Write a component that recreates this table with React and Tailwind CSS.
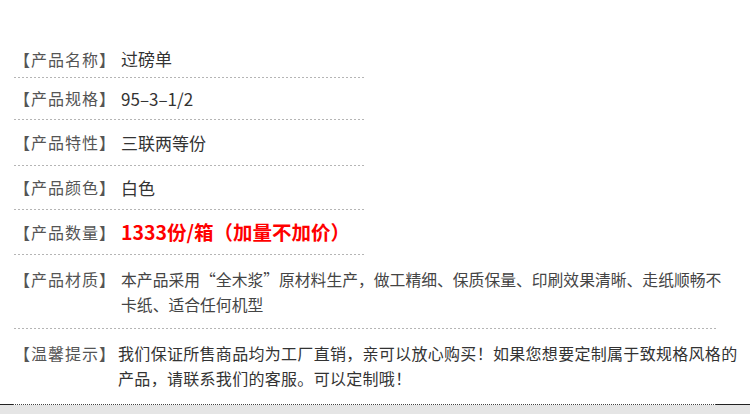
import React from "react";

const rows = [
  { label: "产品名称", value: "过磅单", h: "h-[36px]" },
  { label: "产品规格", value: "95–3–1/2", h: "h-[41px]" },
  { label: "产品特性", value: "三联两等份", h: "h-[45px]" },
  { label: "产品颜色", value: "白色", h: "h-[43px]" },
  { label: "产品数量", value: "1333份/箱（加量不加价）", h: "h-[44px]", red: true },
];

const Dashed = ({ className }) => (
  <div
    className={
      "h-px bg-[linear-gradient(to_right,#b5b5b5_60%,transparent_0)] bg-[length:4px_1px] " +
      className
    }
  ></div>
);

const Label = ({ text }) => (
  <span className="shrink-0 text-[16px] tracking-[1px] leading-[25px] text-[#555]">【{text}】</span>
);

const App = () => {
  return (
    <div className="w-[750px] h-[414px] bg-white flex flex-col font-['Noto_Sans_CJK_SC',sans-serif] overflow-hidden">
      <div className="h-[41px]"></div>

      {rows.map((r) => (
        <div key={r.label} className="flex flex-col">
          <div className={"flex items-center pl-[14px] " + r.h}>
            <Label text={r.label} />
            {r.red ? (
              <span className="ml-[5px] text-[19.5px] font-bold text-[#ff0000]">{r.value}</span>
            ) : (
              <span className="ml-[5px] text-[17px] text-[#333]">{r.value}</span>
            )}
          </div>
          <Dashed className="ml-[14px] w-[352px]" />
        </div>
      ))}

      <div className="flex pl-[14px] py-[12px] h-[73px]">
        <Label text="产品材质" />
        <p className="ml-[5px] text-[15.8px] leading-[25px] text-[#444]">
          本产品采用“全木浆”原材料生产，做工精细、保质保量、印刷效果清晰、走纸顺畅不
          <br />
          卡纸、适合任何机型
        </p>
      </div>
      <Dashed className="ml-[14px] w-[703px]" />

      <div className="flex pl-[14px] py-[12px] h-[75px]">
        <Label text="温馨提示" />
        <p className="ml-[2px] text-[16px] tracking-[0.3px] leading-[25px] text-[#333]">
          我们保证所售商品均为工厂直销，亲可以放心购买！如果您想要定制属于致规格风格的
          <br />
          产品，请联系我们的客服。可以定制哦！
        </p>
      </div>

      <div className="flex h-px">
        <div className="w-[13px] bg-[#222]"></div>
        <div className="w-[703px] bg-[linear-gradient(to_right,#444_50%,transparent_0)] bg-[length:2px_1px]"></div>
        <div className="flex-1 bg-[#222]"></div>
      </div>
      <div className="flex-1 bg-[#e5e5e5]"></div>
    </div>
  );
};

export default App;
